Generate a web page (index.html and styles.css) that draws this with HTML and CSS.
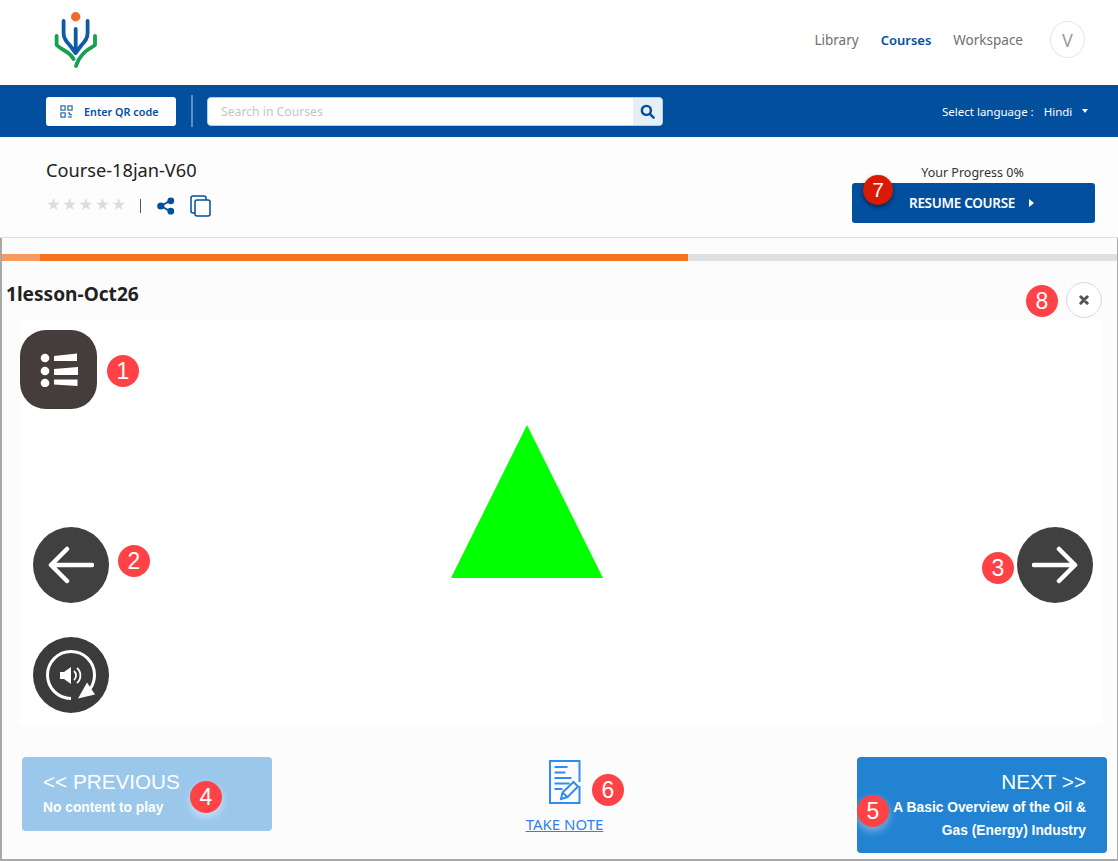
FILE: index.html
```html
<!DOCTYPE html>
<html lang="en">
<head>
    <meta charset="UTF-8">
    <meta name="viewport" content="width=device-width, initial-scale=1.0">
    <title>Course-18jan-V60</title>
    <link rel="stylesheet" href="styles.css">
</head>
<body>
    <div class="page">
        <header class="topbar">
            <svg class="logo" viewBox="30 0 90 80" width="90" height="80" fill="none" stroke-width="3.800" stroke-linecap="round" stroke-linejoin="round">
                <circle cx="75.700" cy="16.700" r="4.700" fill="#ee6c2b"/>
                <path stroke="#0f5aa8" d="M63.600 21v12c0 6 3 9 6 12l6 8 6-8c3-3 6-6 6-12V21M75.700 29v24"/>
                <path stroke="#17a04f" d="M56.600 36v9c4 4 10 6 14 10l3 4M95 36v9c-4 3-9 5-12 9-3 3-5.500 7-7 12"/>
            </svg>
            <nav class="mainnav">
                <a class="navlink">Library</a>
                <a class="navlink active">Courses</a>
                <a class="navlink">Workspace</a>
                <span class="avatar">V</span>
            </nav>
        </header>

        <div class="searchbar">
            <button class="qrbtn">
                <svg viewBox="0 0 14 14" width="13" height="13" fill="none" stroke="#024f9d" stroke-width="1.100">
                    <rect x="1" y="1" width="4.500" height="4.500"/>
                    <rect x="8.500" y="1" width="4.500" height="4.500"/>
                    <rect x="1" y="8.500" width="4.500" height="4.500"/>
                    <path d="M8.500 8.500h2v2h2.500M8.500 13h4.500"/>
                </svg>
                <span>Enter QR code</span>
            </button>
            <span class="divider"></span>
            <div class="searchbox">
                <span class="placeholder">Search in Courses</span>
                <span class="searchbtn">
                    <svg viewBox="0 0 16 16" width="15" height="15" fill="none" stroke="#024f9d" stroke-width="2.600" stroke-linecap="round">
                        <circle cx="6.800" cy="6.800" r="4.800"/>
                        <path d="M10.500 10.500l4 4"/>
                    </svg>
                </span>
            </div>
            <div class="language">
                <span>Select language :</span>
                <span class="langname">Hindi</span>
                <span class="caret"></span>
            </div>
        </div>

        <section class="coursebar">
            <div class="courseinfo">
                <h1 class="coursetitle">Course-18jan-V60</h1>
                <div class="courseactions">
                    <span class="stars">★★★★★</span>
                    <span class="sep"></span>
                    <svg class="shareicon" viewBox="0 0 18 18" width="18" height="18" fill="#024f9d" stroke="#024f9d" stroke-width="2">
                        <path d="M13.500 3.500L4 9l9.500 5.500" fill="none"/>
                        <circle cx="13.800" cy="3.800" r="2.400"/>
                        <circle cx="3.800" cy="9" r="2.600"/>
                        <circle cx="13.800" cy="14.200" r="2.400"/>
                    </svg>
                    <svg viewBox="0 0 21 22" width="21" height="22" fill="none" stroke="#024f9d" stroke-width="1.500">
                        <path d="M5 18H3a2 2 0 0 1-2-2V3a2 2 0 0 1 2-2h11a2 2 0 0 1 2 2v2"/>
                        <rect x="5" y="5" width="15" height="16" rx="2"/>
                    </svg>
                </div>
            </div>
            <div class="progressbox">
                <div class="progresslabel">Your Progress 0%</div>
                <button class="resumebtn">RESUME COURSE <span class="resumearrow"></span></button>
            </div>
        </section>

        <main class="player">
            <div class="progress">
                <div class="progressfill" style="width: 686px"><span class="progressdone"></span></div>
            </div>
            <div class="lessonhead">
                <h2 class="lessontitle">1lesson-Oct26</h2>
                <button class="closebtn">
                    <svg viewBox="0 0 10 10" width="10" height="10" stroke="#555" stroke-width="3" stroke-linecap="round">
                        <path d="M1.800 1.800l6.400 6.400M8.200 1.800l-6.400 6.400"/>
                    </svg>
                </button>
            </div>
            <div class="stage">
                <svg class="triangle" viewBox="0 0 152 153" width="152" height="153"><path d="M76 0l76 153H0z" fill="#00ff00"/></svg>

                <button class="menubtn">
                    <svg viewBox="0 0 38 34" width="38" height="34" fill="#fff">
                        <circle cx="5" cy="5" r="4.300"/>
                        <circle cx="5" cy="18" r="4.300"/>
                        <circle cx="5" cy="30" r="4.300"/>
                        <path d="M14 3L37 .5V8H14zM14 16l24-2v8H14zM14 26.500h23.500V33L14 31.500z"/>
                    </svg>
                </button>
                <button class="roundbtn backbtn">
                    <svg viewBox="0 0 46 38" width="46" height="38" fill="none" stroke="#fff" stroke-width="4.500" stroke-linecap="round" stroke-linejoin="round">
                        <path d="M44 19H3M19 3L3 19l16 16"/>
                    </svg>
                </button>
                <button class="roundbtn nextbtn">
                    <svg viewBox="0 0 46 38" width="46" height="38" fill="none" stroke="#fff" stroke-width="4.500" stroke-linecap="round" stroke-linejoin="round">
                        <path d="M2 19h41M27 3l16 16-16 16"/>
                    </svg>
                </button>
                <button class="roundbtn replaybtn">
                    <svg viewBox="0 0 52 52" width="52" height="52" fill="none" stroke="#fff">
                        <path d="M26 49.500C13 49.500 2.500 39 2.500 26S13 2.500 26 2.500 49.500 13 49.500 26c0 5-1.500 9.500-4 13.500" stroke-width="3"/>
                        <path d="M33 49.500l17-4-8-12z" fill="#fff" stroke="none"/>
                        <path d="M15 23h4l7-5v17l-7-5h-4z" fill="#fff" stroke="none"/>
                        <path d="M29 22a6 6 0 0 1 0 9M32 19a10 10 0 0 1 0 15" stroke-width="1.800"/>
                    </svg>
                </button>
            </div>
            <div class="lessonfoot">
                <div class="stepbtn prevstep">
                    <div class="steplabel">&lt;&lt; PREVIOUS</div>
                    <div class="stepname">No content to play</div>
                </div>
                <div class="takenote">
                    <svg viewBox="0 0 32 44" width="32" height="44" fill="none" stroke="#2f8cf6" stroke-width="2">
                        <path d="M30.500 22V1H1v42h29.500V26"/>
                        <path d="M5.500 7h13M5.500 12.500h11M5.500 18h17M5.500 23.500h15M5.500 29h8"/>
                        <path d="M12 39l1.500-6.500L24.500 22l4.500 4.500L18.500 37z" fill="#fff"/>
                        <path d="M13.500 32.500L18.500 37"/>
                    </svg>
                    <a class="takenotelink">TAKE NOTE</a>
                </div>
                <div class="stepbtn nextstep">
                    <div class="steplabel">NEXT &gt;&gt;</div>
                    <div class="stepname">A Basic Overview of the Oil &amp; Gas (Energy) Industry</div>
                </div>
            </div>
        </main>

        <span class="badge badge1">1</span>
        <span class="badge badge2">2</span>
        <span class="badge badge3">3</span>
        <span class="badge badge4">4</span>
        <span class="badge badge5">5</span>
        <span class="badge badge6">6</span>
        <span class="badge badge7">7</span>
        <span class="badge badge8">8</span>
    </div>
</body>
</html>
```

FILE: styles.css
```css
* {
    box-sizing: border-box;
}
body {
    margin: 0;
    font-family: "Noto Sans", Arial, sans-serif;
    background-color: #fff;
    color: #222;
}
button {
    font-family: inherit;
    border: none;
    padding: 0;
}
.page {
    position: relative;
    width: 1118px;
    height: 861px;
    overflow: hidden;
}

/* top header */
.topbar {
    height: 85px;
    display: flex;
    justify-content: space-between;
    padding-left: 30px;
    background: #fff;
}
.logo {
    display: block;
}
.mainnav {
    display: flex;
    align-items: center;
    gap: 22px;
    padding-right: 33px;
    padding-bottom: 6px;
    font-size: 13.500px;
    color: #6f6f6f;
}
.navlink.active {
    color: #024f9d;
    font-weight: 600;
    font-size: 13px;
}
.avatar {
    width: 35px;
    height: 37px;
    margin-left: 5px;
    display: flex;
    align-items: center;
    justify-content: center;
    border: 1px solid #e6e6e6;
    border-radius: 50%;
    font-size: 18px;
    color: #9a9a9a;
}

/* blue search bar */
.searchbar {
    height: 52px;
    display: flex;
    align-items: center;
    padding-left: 46px;
    background: #024f9d;
}
.qrbtn {
    width: 130px;
    height: 29px;
    display: flex;
    align-items: center;
    gap: 11px;
    padding-left: 14px;
    background: #fff;
    border-radius: 3px;
    font-size: 10.800px;
    font-weight: 600;
    color: #024f9d;
}
.divider {
    width: 2px;
    height: 32px;
    margin: 0 14px 0 15px;
    background: #5f90c2;
}
.searchbox {
    width: 456px;
    height: 29px;
    display: flex;
    justify-content: space-between;
    align-items: stretch;
    background: #fff;
    border: 1px solid #a9d2ec;
    border-radius: 4px;
    overflow: hidden;
}
.placeholder {
    padding-left: 13px;
    font-size: 12.200px;
    line-height: 27px;
    color: #c4c4c4;
}
.searchbtn {
    width: 29px;
    display: flex;
    align-items: center;
    justify-content: center;
    background: #e7eff6;
}
.language {
    display: flex;
    align-items: center;
    margin-left: 279px;
    font-size: 11.500px;
    color: #fff;
}
.langname {
    margin-left: 10px;
}
.caret {
    margin-left: 10px;
    border-left: 3.500px solid transparent;
    border-right: 3.500px solid transparent;
    border-top: 4px solid #fff;
}

/* course title row */
.coursebar {
    height: 101px;
    display: flex;
    justify-content: space-between;
    padding: 20px 23px 0 46px;
    background: #fdfdfd;
    border-bottom: 1px solid #dedede;
}
.coursetitle {
    margin: 0;
    font-size: 18.200px;
    font-weight: 400;
    line-height: 26px;
    color: #222;
}
.courseactions {
    display: flex;
    align-items: center;
    margin-top: 12px;
}
.stars {
    width: 94px;
    margin-bottom: 3px;
    font-family: "DejaVu Sans", sans-serif;
    font-size: 16.500px;
    letter-spacing: 1.500px;
    color: #dcdcdc;
}
.sep {
    width: 1px;
    height: 14px;
    background: #555;
}
.shareicon {
    margin: 0 15px 0 16px;
}
.progressbox {
    width: 243px;
}
.progresslabel {
    margin-top: 6px;
    padding-right: 2px;
    height: 20px;
    font-size: 12.500px;
    line-height: 20px;
    text-align: center;
    color: #333;
}
.resumebtn {
    width: 243px;
    height: 40px;
    display: flex;
    align-items: center;
    padding-left: 57px;
    background: #024f9d;
    border-radius: 3px;
    font-size: 13.500px;
    font-weight: 600;
    letter-spacing: -0.300px;
    color: #fff;
}
.resumearrow {
    margin-left: 14px;
    border-top: 4px solid transparent;
    border-bottom: 4px solid transparent;
    border-left: 5px solid #fff;
}

/* player frame */
.player {
    height: 623px;
    background: #fcfcfc;
    border-left: 2px solid #a8a8a8;
    border-right: 1px solid #a8a8a8;
    border-bottom: 2px solid #a8a8a8;
    padding-top: 16px;
}
.progress {
    height: 7px;
    background: #e0e0e0;
}
.progressfill {
    height: 100%;
    background: #f47321;
}
.progressdone {
    display: block;
    width: 38px;
    height: 100%;
    background: #f69a60;
}
.lessonhead {
    height: 59px;
    display: flex;
    justify-content: space-between;
    padding: 21px 15px 0 4px;
}
.lessontitle {
    margin: 0;
    font-size: 19.100px;
    font-weight: 700;
    line-height: 25px;
    color: #222;
}
.closebtn {
    width: 36px;
    height: 36px;
    display: flex;
    align-items: center;
    justify-content: center;
    background: #fff;
    border: 1px solid #d8d8d8;
    border-radius: 50%;
}
.stage {
    position: relative;
    width: 1083px;
    height: 405px;
    margin-left: 18px;
    padding: 105px 0 0 431px;
    background: #fff;
}
.triangle {
    display: block;
}
.menubtn {
    position: absolute;
    left: 0;
    top: 10px;
    width: 77px;
    height: 79px;
    display: flex;
    align-items: center;
    justify-content: center;
    background: #453d3b;
    border-radius: 26px;
}
.roundbtn {
    position: absolute;
    width: 76px;
    height: 76px;
    display: flex;
    align-items: center;
    justify-content: center;
    background: #404040;
    border-radius: 50%;
}
.backbtn {
    left: 13px;
    top: 207px;
}
.nextbtn {
    left: 997px;
    top: 207px;
}
.replaybtn {
    left: 13px;
    top: 317px;
    background: #3b3b3b;
}

/* previous, next and note */
.lessonfoot {
    display: flex;
    justify-content: space-between;
    align-items: flex-start;
    padding: 32px 10px 0 20px;
}
.stepbtn {
    width: 250px;
    padding: 11px 21px 0;
    border-radius: 4px;
    color: #fff;
}
.prevstep {
    height: 74px;
    background: #9ac7ea;
}
.nextstep {
    height: 96px;
    background: #2283d2;
    text-align: right;
}
.steplabel {
    font-family: "Liberation Sans", Arial, sans-serif;
    font-size: 20.700px;
    line-height: 27px;
}
.stepname {
    margin-top: 1px;
    font-family: "Liberation Sans", Arial, sans-serif;
    font-size: 13.800px;
    font-weight: 700;
    line-height: 23px;
}
.nextstep .stepname {
    margin-left: 10px;
}
.takenote {
    display: flex;
    flex-direction: column;
    align-items: center;
    margin: 3px 0 0;
}
.takenotelink {
    margin-top: 10px;
    font-size: 15px;
    line-height: 20px;
    color: #2f80f6;
    text-decoration: underline;
}

/* numbered callouts laid over the screenshot */
.badge {
    position: absolute;
    width: 32px;
    height: 32px;
    display: flex;
    align-items: center;
    justify-content: center;
    background: #ff4245;
    border-radius: 50%;
    font-family: "Liberation Sans", Arial, sans-serif;
    font-size: 23px;
    color: #fff;
}
.badge1 { left: 107px; top: 355px; }
.badge2 { left: 118px; top: 545px; }
.badge3 { left: 982px; top: 552px; }
.badge4 { left: 190px; top: 781px; box-shadow: 0 4px 8px rgba(255, 255, 255, 0.5); }
.badge5 { left: 857px; top: 795px; box-shadow: 0 4px 8px rgba(255, 255, 255, 0.4); }
.badge6 { left: 592px; top: 774px; }
.badge7 {
    left: 863px;
    top: 175px;
    width: 30px;
    height: 30px;
    background: #d91a05;
    box-shadow: 0 2px 4px rgba(0, 0, 0, 0.5);
    font-size: 21px;
}
.badge8 { left: 1026px; top: 285px; }
```
